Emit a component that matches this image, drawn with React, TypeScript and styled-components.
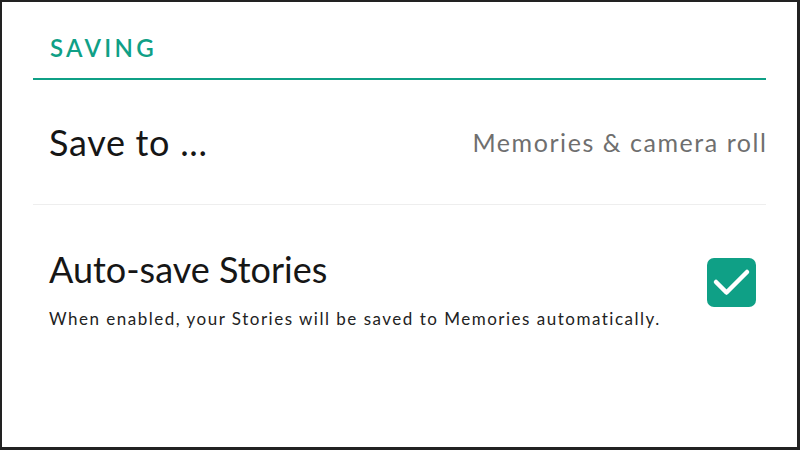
import React from "react";
import styled, { createGlobalStyle } from "styled-components";

const GlobalStyle = createGlobalStyle`
    html, body {
        margin: 0;
        padding: 0;
        background: #222222;
    }
    body {
        font-family: Lato, "Open Sans", sans-serif;
    }
`;

const Colors = {
    teal: "#0fa086",
    black: "#161616",
    gray: "#6f6f6f",
    line: "#eeeeee",
};

const Frame = styled.div`
    box-sizing: border-box;
    width: 800px;
    height: 450px;
    background: #ffffff;
    border-style: solid;
    border-color: #222222;
    border-width: 2px 3px 3px 2px;
    padding: 0 31px;
`;

const Header = styled.div`
    padding: 34px 0 18px 17px;
    border-bottom: 2px solid ${Colors.teal};
`;

const SectionTitle = styled.div`
    font-size: 24px;
    line-height: 1;
    font-weight: 600;
    letter-spacing: 3.3px;
    color: ${Colors.teal};
`;

const Row = styled.div<{ $divider?: boolean }>`
    display: flex;
    align-items: center;
    justify-content: space-between;
    height: 124px;
    padding-left: 16px;
    border-bottom: ${(p) => (p.$divider ? `1px solid ${Colors.line}` : "none")};
`;

const ToggleRow = styled.div`
    display: flex;
    align-items: flex-start;
    justify-content: space-between;
    padding: 46px 10px 0 16px;
`;

const Label = styled.div<{ $spacing?: number }>`
    font-size: 36px;
    line-height: 1;
    letter-spacing: ${(p) => p.$spacing ?? 0}px;
    color: ${Colors.black};
`;

const Value = styled.div`
    font-size: 25px;
    line-height: 1;
    letter-spacing: 1.55px;
    margin-right: -1.5px;
    color: ${Colors.gray};
`;

const Info = styled.div`
    display: flex;
    flex-direction: column;
    gap: 23px;
`;

const Description = styled.div`
    font-size: 17px;
    line-height: 1;
    letter-spacing: 1.5px;
    color: #222222;
`;

const CheckBox = styled.div`
    width: 49px;
    height: 49px;
    margin-top: 7px;
    border-radius: 7px;
    background: ${Colors.teal};
    display: flex;
    align-items: center;
    justify-content: center;
`;

const App = () => {
    return (
        <>
            <GlobalStyle />
            <Frame>
                <Header>
                    <SectionTitle>SAVING</SectionTitle>
                </Header>
                <Row $divider>
                    <Label $spacing={0.7}>Save to ...</Label>
                    <Value>Memories &amp; camera roll</Value>
                </Row>
                <ToggleRow>
                    <Info>
                        <Label>Auto-save Stories</Label>
                        <Description>
                            When enabled, your Stories will be saved to Memories automatically.
                        </Description>
                    </Info>
                    <CheckBox>
                        <svg width="49" height="49" viewBox="0 0 49 49">
                            <path
                                d="M9 24 L19.5 34.5 L40 14"
                                fill="none"
                                stroke="#ffffff"
                                strokeWidth="4.5"
                                strokeLinecap="round"
                                strokeLinejoin="round"
                            />
                        </svg>
                    </CheckBox>
                </ToggleRow>
            </Frame>
        </>
    );
};

export default App;
